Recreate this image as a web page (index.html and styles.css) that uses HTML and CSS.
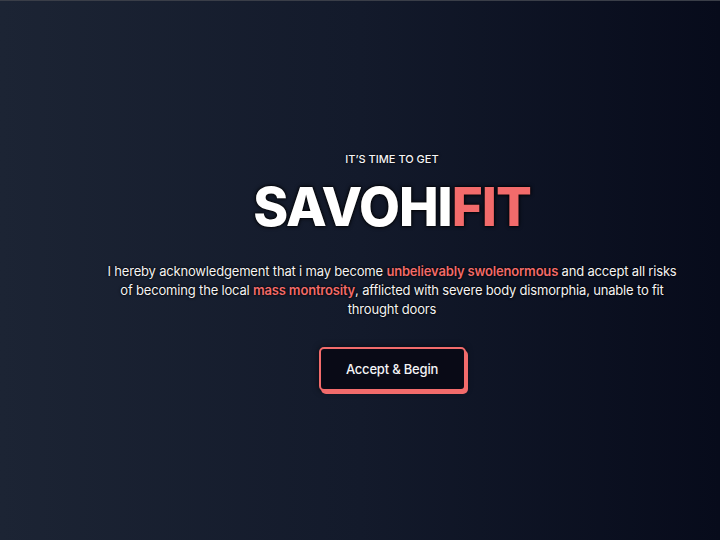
FILE: index.html
```html
<!DOCTYPE html>
<html lang="en">
<head>
<meta charset="utf-8">
<title>SavohiFit</title>
<link rel="stylesheet" href="styles.css">
</head>
<body>
<main class="hero">
  <div class="content">
    <p class="eyebrow">IT’S TIME TO GET</p>
    <h1 class="title">SAVOHI<span class="accent">FIT</span></h1>
    <p class="lead">I hereby acknowledgement that i may become <strong class="hl">unbelievably swolenormous</strong> and accept all risks of becoming the local <strong class="hl">mass montrosity</strong>, afflicted with severe body dismorphia, unable to fit throught doors</p>
    <button class="cta" type="button">Accept &amp; Begin</button>
  </div>
</main>
</body>
</html>
```
FILE: styles.css
```css
* { box-sizing: border-box; }
html, body { margin: 0; padding: 0; }
body {
  font-family: "Inter", "Noto Sans", sans-serif;
  color: #f4f4f6;
  background: #0f1424;
}
.hero {
  min-height: 540px;
  border-top: 1px solid #3a3e48;
  background: linear-gradient(90deg, #1c2434 0%, #131a2b 50%, #070b1b 100%);
  display: flex;
  align-items: center;
  justify-content: center;
}
.content {
  display: flex;
  flex-direction: column;
  align-items: center;
  text-align: center;
  padding-top: 2px;
  margin-left: 64px;
}
.eyebrow {
  margin-top: 0;
  margin-bottom: 0;
  font-size: 11px;
  font-weight: 500;
  text-shadow: 0 0 3px #000;
}
.title {
  margin-top: 15px;
  margin-bottom: 0;
  font-size: 53px;
  font-weight: 800;
  line-height: 1;
  letter-spacing: -1px;
  color: #ffffff;
  text-shadow: 0 0 4px #000, 0 0 2px #000;
}
.accent { color: #f26b6b; }
.lead {
  width: 574px;
  margin: 28px 0 0;
  font-size: 13px;
  line-height: 19px;
  font-weight: 400;
  letter-spacing: -0.18px;
  text-shadow: 0 0 3px #000, 0 0 1px #000;
}
.hl { color: #f26b6b; font-weight: 600; }
.cta {
  margin-top: 28px;
  width: 147px;
  height: 44px;
  font-family: inherit;
  font-size: 13px;
  font-weight: 500;
  letter-spacing: -0.2px;
  color: #f4f4f6;
  background: #090a16;
  border: 2px solid #f26b6b;
  border-radius: 5px;
  box-shadow: 2px 3px 0 #f26b6b, 0 0 6px rgba(0,0,0,0.6);
  cursor: pointer;
}
```
